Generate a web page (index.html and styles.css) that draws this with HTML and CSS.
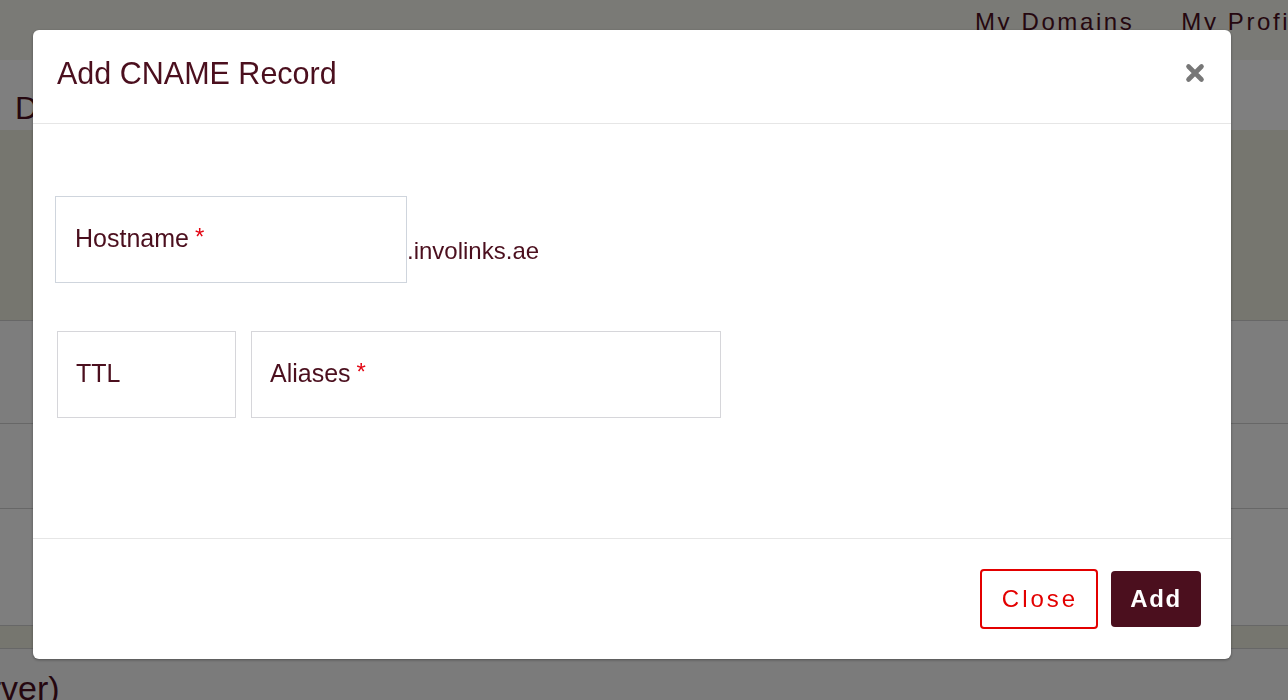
FILE: index.html
```html
<!DOCTYPE html>
<html>
<head>
<meta charset="utf-8">
<link rel="stylesheet" href="styles.css">
</head>
<body>
<div class="page">
  <nav class="topnav">
    <a class="navlink">My Domains</a>
    <a class="navlink">My Profile</a>
  </nav>
  <div class="pagehead">DNS Records</div>
  <div class="tablehead"></div>
  <div class="row r1"></div>
  <div class="row r2"></div>
  <div class="row r3"></div>
  <div class="row band"></div>
  <div class="pagefoot">Name Server)</div>
</div>

<div class="backdrop">
  <div class="modal">
    <div class="modal-header">
      <h2 class="modal-title">Add CNAME Record</h2>
      <span class="modal-x" aria-label="close">
        <svg width="20" height="20" viewBox="0 0 20 20"><path d="M3.5 3.5 L16.5 16.5 M16.5 3.5 L3.5 16.5" stroke="#777" stroke-width="4.6" stroke-linecap="round"/></svg>
      </span>
    </div>
    <div class="modal-body">
      <div class="host-row">
        <div class="field host"><span class="label">Hostname</span><span class="req">*</span></div>
        <span class="suffix">.involinks.ae</span>
      </div>
      <div class="pair-row">
        <div class="field ttl"><span class="label">TTL</span></div>
        <div class="field aliases"><span class="label">Aliases</span><span class="req">*</span></div>
      </div>
    </div>
    <div class="modal-footer">
      <button class="btn btn-close">Close</button>
      <button class="btn btn-add">Add</button>
    </div>
  </div>
</div>
</body>
</html>
```

FILE: styles.css
```css
html, body {
  margin: 0;
  padding: 0;
  width: 1288px;
  height: 700px;
  overflow: hidden;
  font-family: "Liberation Sans", Arial, sans-serif;
  color: #4b0f1e;
}

.page {
  background: #f6f6f6;
  height: 700px;
}

.topnav {
  height: 60px;
  background: #f4f4ec;
  display: flex;
  gap: 47px;
  padding-left: 975px;
  white-space: nowrap;
  overflow: hidden;
}
.navlink {
  font-size: 24px;
  letter-spacing: 2.6px;
  color: #4b0f1e;
  padding-top: 8px;
}

.pagehead {
  height: 70px;
  background: #ffffff;
  font-size: 32px;
  padding-left: 15px;
  line-height: 96px;
  overflow: hidden;
  white-space: nowrap;
}
.tablehead {
  height: 190px;
  background: #ececde;
  border-bottom: 1px solid #cfcfcf;
}
.row {
  background: #fafafa;
  border-bottom: 1px solid #cfcfcf;
}
.r1 { height: 102px; }
.r2 { height: 84px; }
.r3 { height: 116px; background: #fcfcfc; }
.row.band { height: 22px; background: #ececde; }
.pagefoot {
  background: #f6f6f6;
  font-size: 34px;
  margin-left: -152px;
  padding-top: 20px;
  white-space: nowrap;
}

.backdrop {
  position: fixed;
  inset: 0;
  background: rgba(0, 0, 0, 0.5);
}

.modal {
  margin: 30px 0 0 33px;
  width: 1198px;
  height: 629px;
  background: #fff;
  border-radius: 6px;
  box-shadow: 0 1px 3px rgba(0,0,0,0.35);
  display: flex;
  flex-direction: column;
}

.modal-header {
  height: 94px;
  border-bottom: 1px solid #e6e6e6;
  display: flex;
  align-items: center;
  justify-content: space-between;
  padding: 0 26px 0 24px;
  box-sizing: border-box;
}
.modal-title {
  margin: 0;
  font-size: 30.5px;
  font-weight: 400;
  color: #4b0f1e;
  position: relative;
  top: -3px;
}
.modal-x {
  display: flex;
  position: relative;
  top: -4px;
}

.modal-body {
  flex: 1;
  padding: 72px 22px 0 22px;
  border-bottom: 1px solid #e6e6e6;
}

.host-row {
  display: flex;
  align-items: flex-start;
}
.field {
  border: 1px solid #cfd5dd;
  height: 87px;
  box-sizing: border-box;
  display: flex;
  align-items: center;
  padding-left: 19px;
  font-size: 25px;
  color: #4b0f1e;
  padding-bottom: 2px;
}
.field.host { width: 352px; }
.req { color: #e30613; margin-left: 6px; font-size: 24px; position: relative; top: -2px; }
.suffix {
  font-size: 24px;
  color: #4b0f1e;
  margin-top: 41px;
}

.pair-row {
  display: flex;
  gap: 15px;
  margin-top: 48px;
  padding-left: 2px;
}
.field.ttl { width: 179px; padding-left: 18px; border-color: #d6d6da; }
.field.aliases { width: 470px; border-color: #d6d6da; padding-left: 18px; }

.modal-footer {
  height: 120px;
  display: flex;
  align-items: center;
  justify-content: flex-end;
  gap: 13px;
  padding-right: 30px;
}
.btn {
  font-family: "Liberation Sans", Arial, sans-serif;
  font-size: 24px;
  letter-spacing: 3px;
  border-radius: 4px;
  cursor: pointer;
  box-sizing: border-box;
  padding: 0;
}
.btn-close {
  width: 118px;
  height: 60px;
  background: #fff;
  border: 2px solid #e30000;
  color: #e30000;
  padding-left: 2px;
}
.btn-add {
  width: 90px;
  height: 56px;
  background: #4b0f1e;
  border: none;
  color: #fff;
  font-weight: 700;
  letter-spacing: 1.6px;
}
```
